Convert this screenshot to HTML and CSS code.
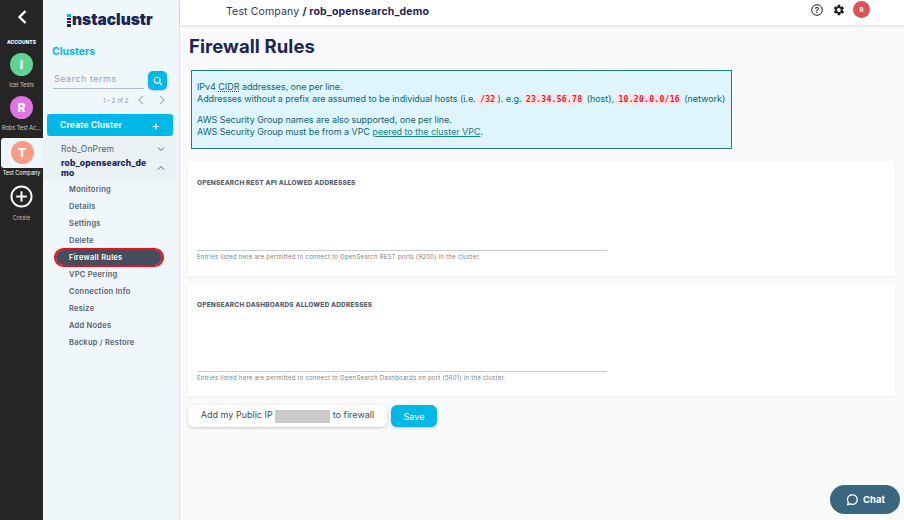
FILE: index.html
```html
<!DOCTYPE html>
<html lang="en">
<head>
    <meta charset="UTF-8">
    <meta name="viewport" content="width=device-width, initial-scale=1.0">
    <title>Firewall Rules</title>
    <link rel="stylesheet" href="styles.css">
</head>
<body>
    <div class="app">
        <aside class="rail">
            <a class="rail-back" href="#">
                <svg width="12" height="16" viewBox="0 0 12 16"><path d="M9.500 2 L3.500 8 L9.500 14" fill="none" stroke="#fff" stroke-width="2.400"/></svg>
            </a>
            <div class="rail-title">ACCOUNTS</div>
            <div class="account">
                <span class="avatar avatar-green">I</span>
                <span class="account-name">Icel Tests</span>
            </div>
            <div class="account">
                <span class="avatar avatar-purple">R</span>
                <span class="account-name">Robs Test Ac...</span>
            </div>
            <div class="account account-active">
                <span class="avatar avatar-salmon">T</span>
            </div>
            <span class="account-name account-name-active">Test Company</span>
            <div class="account account-create">
                <svg width="23" height="23" viewBox="0 0 24 24"><circle cx="12" cy="12" r="10.500" fill="none" stroke="#fff" stroke-width="2"/><path d="M12 6.500v11M6.500 12h11" stroke="#fff" stroke-width="2"/></svg>
                <span class="account-name create-name">Create</span>
            </div>
        </aside>

        <aside class="sidebar">
            <div class="logo"><span class="logo-bars"></span>nstaclustr</div>
            <h2 class="side-title">Clusters</h2>
            <div class="search">
                <div class="search-input">Search terms</div>
                <button class="search-btn">
                    <svg width="10" height="10" viewBox="0 0 12 12"><circle cx="5" cy="5" r="3.600" fill="none" stroke="#fff" stroke-width="1.300"/><path d="M7.700 7.700 11 11" stroke="#fff" stroke-width="1.300"/></svg>
                </button>
            </div>
            <div class="pager">
                <span>1 – 2 of 2</span>
                <svg width="8" height="10" viewBox="0 0 8 10"><path d="M6 1 2 5l4 4" fill="none" stroke="#a9b1bd" stroke-width="1.200"/></svg>
                <svg class="pager-next" width="8" height="10" viewBox="0 0 8 10"><path d="M2 1l4 4-4 4" fill="none" stroke="#a9b1bd" stroke-width="1.200"/></svg>
            </div>
            <button class="create-cluster"><span>Create Cluster</span><span class="create-plus">+</span></button>
            <div class="cluster-group">
                <div class="cluster-row">
                    <span>Rob_OnPrem</span>
                    <svg width="8" height="6" viewBox="0 0 8 6"><path d="M1 1.500l3 3 3-3" fill="none" stroke="#555e72" stroke-width="1"/></svg>
                </div>
                <div class="cluster-row cluster-open">
                    <span>rob_opensearch_de<br>mo</span>
                    <svg width="8" height="6" viewBox="0 0 8 6"><path d="M1 4.500l3-3 3 3" fill="none" stroke="#555e72" stroke-width="1"/></svg>
                </div>
            </div>
            <ul class="cluster-menu">
                <li>Monitoring</li>
                <li>Details</li>
                <li>Settings</li>
                <li>Delete</li>
                <li class="menu-active">Firewall Rules</li>
                <li>VPC Peering</li>
                <li>Connection Info</li>
                <li>Resize</li>
                <li>Add Nodes</li>
                <li>Backup / Restore</li>
            </ul>
        </aside>

        <div class="content">
            <header class="topbar">
                <div class="crumbs">Test Company <b>/ rob_opensearch_demo</b></div>
                <div class="top-icons">
                    <svg width="12" height="12" viewBox="0 0 12 12"><circle cx="6" cy="6" r="5.300" fill="none" stroke="#222" stroke-width="1"/><text x="6" y="8.800" text-anchor="middle" class="help-mark">?</text></svg>
                    <svg width="12" height="12" viewBox="0 0 24 24"><path fill="#222" fill-rule="evenodd" d="M19.400 13a7.500 7.500 0 0 0 0-2l2.600-2-2.500-4.300-3 1.200a7.500 7.500 0 0 0-1.700-1L14.300 1.700h-5l-.5 3.200a7.500 7.500 0 0 0-1.700 1l-3-1.200L1.600 9l2.600 2a7.500 7.500 0 0 0 0 2l-2.600 2 2.500 4.300 3-1.200a7.500 7.500 0 0 0 1.700 1l.5 3.200h5l.5-3.200a7.500 7.500 0 0 0 1.700-1l3 1.200L22 15zM11.800 15.800a3.800 3.800 0 1 1 0-7.600 3.800 3.800 0 0 1 0 7.600z"/></svg>
                    <span class="user-badge">R</span>
                </div>
            </header>
            <main class="main">
                <h1>Firewall Rules</h1>
                <div class="notice">
                    <p>IPv4 <abbr>CIDR</abbr> addresses, one per line.<br>
                    Addresses without a prefix are assumed to be individual hosts (i.e. <code>/32</code>). e.g. <code>23.34.56.78</code> (host), <code>10.20.0.0/16</code> (network)</p>
                    <p>AWS Security Group names are also supported, one per line.<br>
                    AWS Security Group must be from a VPC <a href="#">peered to the cluster VPC</a>.</p>
                </div>
                <section class="card card-rest">
                    <h3>OPENSEARCH REST API ALLOWED ADDRESSES</h3>
                    <div class="field"></div>
                    <p class="hint">Entries listed here are permitted to connect to OpenSearch REST ports (9200) in the cluster.</p>
                </section>
                <section class="card card-dash">
                    <h3>OPENSEARCH DASHBOARDS ALLOWED ADDRESSES</h3>
                    <div class="field"></div>
                    <p class="hint">Entries listed here are permitted to connect to OpenSearch Dashboards on port (5601) in the cluster.</p>
                </section>
                <div class="actions">
                    <button class="btn-ip">Add my Public IP <span class="redacted"></span> to firewall</button>
                    <button class="btn-save">Save</button>
                </div>
            </main>
        </div>
    </div>

    <a class="chat" href="#">
        <svg width="14" height="14" viewBox="0 0 16 16"><path d="M8.500 2a5.500 5.500 0 0 1 0 11c-1 0-1.800-.2-2.600-.6L3 13.500l.8-2.800A5.500 5.500 0 0 1 8.500 2z" fill="none" stroke="#fff" stroke-width="1.500" stroke-linejoin="round"/></svg>
        Chat
    </a>
</body>
</html>
```

FILE: styles.css
```css
* {
    box-sizing: border-box;
}

html, body {
    margin: 0;
    height: 100%;
    overflow: hidden;
}

body {
    font-family: Inter, "Liberation Sans", sans-serif;
    color: #1a2552;
    background-color: #fafafa;
}

.app {
    display: flex;
    height: 520px;
}

/* account rail */
.rail {
    width: 43px;
    flex-shrink: 0;
    background-color: #252525;
    display: flex;
    flex-direction: column;
    align-items: center;
    color: #fff;
}

.rail-back {
    display: block;
    height: 16px;
    margin-top: 9px;
}

.rail-title {
    font-size: 5px;
    font-weight: 800;
    margin-top: 13px;
    line-height: 8px;
}

.account {
    width: 100%;
    display: flex;
    flex-direction: column;
    align-items: center;
    margin-top: 7px;
}

.avatar {
    width: 23px;
    height: 23px;
    border-radius: 50%;
    color: #fff;
    font-size: 12px;
    font-weight: 800;
    display: flex;
    align-items: center;
    justify-content: center;
}

.avatar-green { background-color: #63d195; }
.avatar-purple { background-color: #df74e2; }
.avatar-salmon { background-color: #f79c85; }

.account-name {
    font-size: 5.500px;
    line-height: 8px;
    margin-top: 5px;
    color: #ccc;
    white-space: nowrap;
}

.account-active {
    width: 42px;
    height: 30px;
    margin: 6px 0 0 1px;
    padding-top: 3px;
    background-color: #f0f7fa;
    border-radius: 3px 0 0 3px;
}

.account-name-active {
    margin-top: 1px;
    color: #fff;
}

.account-create {
    margin-top: 8px;
}

.create-name {
    margin-top: 6px;
    color: #bbb;
}

/* clusters sidebar */
.sidebar {
    width: 137px;
    flex-shrink: 0;
    background-color: #f0f7fa;
    border-right: 1px solid #dfe4e8;
}

.logo {
    margin: 10px 0 0 24px;
    font-size: 15.500px;
    font-weight: 900;
    line-height: 20px;
    color: #1a2552;
    display: flex;
    align-items: center;
}

.logo-bars {
    width: 4px;
    height: 13px;
    margin-right: 1px;
    background: linear-gradient(#00b8e6 0 3px, transparent 3px 4px, #1a2552 4px 6px, transparent 6px 7px, #1a2552 7px 9px, transparent 9px 10px, #1a2552 10px 13px);
}

.side-title {
    margin: 15px 0 0 9px;
    font-size: 10.500px;
    font-weight: 700;
    line-height: 14px;
    color: #00b8e6;
}

.search {
    display: flex;
    align-items: center;
    margin: 12px 0 0 10px;
    gap: 4px;
}

.search-input {
    width: 91px;
    height: 16px;
    font-size: 9px;
    line-height: 11px;
    letter-spacing: 0.5px;
    color: #9aa3ad;
    border-bottom: 1px solid #b3bbc9;
    padding-left: 1px;
}

.search-btn {
    width: 19px;
    height: 19px;
    border: none;
    border-radius: 5px;
    padding: 0;
    background-color: #00b8e6;
    box-shadow: 0 1px 2px rgba(0, 0, 0, 0.2);
    display: flex;
    align-items: center;
    justify-content: center;
}

.pager {
    display: flex;
    align-items: center;
    margin: 4px 0 0 60px;
    height: 12px;
    font-size: 6px;
    color: #8a93a0;
}

.pager svg {
    margin-left: 9px;
}

.pager .pager-next {
    margin-left: 13px;
}

.create-cluster {
    display: flex;
    justify-content: space-between;
    align-items: center;
    width: 126px;
    height: 22px;
    margin: 8px 0 0 4px;
    padding: 0 13px;
    border: none;
    border-radius: 3px;
    background-color: #00b8e6;
    color: #fff;
    font-family: inherit;
    font-size: 8.500px;
    font-weight: 700;
    letter-spacing: 0.15px;
}

.create-plus {
    font-size: 13px;
    font-weight: 400;
}

.cluster-group {
    margin: 2px 0 0 0;
    width: 133px;
    padding: 5px 11px 3px 18px;
    background-color: #e9f1f3;
}

.cluster-row {
    display: flex;
    justify-content: space-between;
    align-items: center;
    font-size: 8.500px;
    line-height: 10px;
    letter-spacing: 0.15px;
    color: #555e72;
    padding: 1px 0 4px;
}

.cluster-open {
    color: #1a2552;
    font-weight: 800;
    padding: 0;
}

.cluster-menu {
    list-style: none;
    margin: 0;
    padding: 0;
}

.cluster-menu li {
    font-size: 7.500px;
    font-weight: 600;
    line-height: 17px;
    height: 17px;
    letter-spacing: 0.25px;
    padding-left: 26px;
    color: #555e72;
}

.cluster-menu .menu-active {
    width: 106px;
    height: 15px;
    line-height: 15px;
    margin: 1px 0 1px 13px;
    padding-left: 13px;
    color: #fff;
    background-color: #464d5e;
    border-radius: 8px;
    outline: 2px solid #f00d18;
}

/* main area */
.content {
    flex: 1;
    min-width: 0;
}

.topbar {
    height: 25px;
    background-color: #fff;
    box-shadow: 0 1px 3px rgba(0, 0, 0, 0.12);
    display: flex;
    justify-content: space-between;
    align-items: center;
    padding: 0 34px 6px 46px;
}

.crumbs {
    margin-top: 3px;
    font-size: 10.500px;
    letter-spacing: 0.15px;
    color: #2d3654;
}

.crumbs b {
    color: #1a2552;
    font-weight: 700;
}

.top-icons {
    display: flex;
    align-items: center;
    gap: 10px;
}

.user-badge {
    width: 17px;
    height: 17px;
    margin-left: -2px;
    border-radius: 50%;
    background-color: #dd5158;
    color: #fff;
    font-size: 6px;
    font-weight: 700;
    display: flex;
    align-items: center;
    justify-content: center;
}

.help-mark {
    font-size: 8px;
    font-weight: 600;
    fill: #222;
}

.main {
    padding: 9px 9px 0 8px;
}

h1 {
    margin: 0 0 0 1px;
    font-size: 18.500px;
    font-weight: 700;
    line-height: 24px;
    letter-spacing: 0.1px;
    color: #1a2552;
}

.notice {
    width: 541px;
    height: 79px;
    margin: 12px 0 0 3px;
    padding: 10px 5px;
    background-color: #def6fb;
    border: 1px solid #1c7f93;
    color: #0f6474;
    font-size: 9px;
    line-height: 12px;
    letter-spacing: -0.05px;
    white-space: nowrap;
}

.notice p {
    margin: 0 0 8px;
}

.notice abbr {
    text-decoration: underline dotted;
}

.notice a {
    color: #0f8299;
    text-decoration: underline;
}

.notice code {
    font-family: "DejaVu Sans Mono", monospace;
    font-size: 8px;
    font-weight: 700;
    letter-spacing: 0.3px;
    color: #d81f3a;
    background-color: #fbe3e6;
    padding: 1px 2px;
    border-radius: 2px;
}

.card {
    background-color: #fff;
    padding: 17px 9px 0;
    box-shadow: 0 1px 2px rgba(0, 0, 0, 0.06);
}

.card-rest {
    height: 114px;
    margin-top: 13px;
}

.card-rest .field {
    height: 64px;
}

.card-dash {
    height: 112px;
    margin-top: 8px;
}

.card-dash .field {
    height: 63px;
}

.card h3 {
    margin: 0;
    font-size: 6.500px;
    font-weight: 800;
    line-height: 8px;
    letter-spacing: 0.2px;
    color: #555e72;
}

.field {
    width: 410px;
    border-bottom: 1px solid #c6cbd6;
}

.hint {
    margin: 2px 0 0;
    font-size: 6px;
    line-height: 8px;
    letter-spacing: 0.25px;
    color: #777f8c;
}

.actions {
    display: flex;
    gap: 4px;
    margin-top: 9px;
}

.actions button {
    height: 22px;
    border: none;
    border-radius: 6px;
    font-family: inherit;
    font-size: 9px;
    padding: 0;
    box-shadow: 0 1px 3px rgba(0, 0, 0, 0.22);
}

.btn-ip {
    width: 199px;
    background-color: #fff;
    color: #444c5c;
}

.redacted {
    display: inline-block;
    width: 55px;
    height: 13px;
    vertical-align: middle;
    background-color: #cbcbcb;
}

.btn-save {
    width: 46px;
    background-color: #00b8e6;
    color: #fff;
}

.chat {
    position: fixed;
    right: 4px;
    bottom: 6px;
    width: 70px;
    height: 29px;
    border-radius: 15px;
    background-color: #3b6680;
    color: #fff;
    font-size: 9.500px;
    font-weight: 700;
    text-decoration: none;
    display: flex;
    align-items: center;
    justify-content: center;
    gap: 4px;
}
```
